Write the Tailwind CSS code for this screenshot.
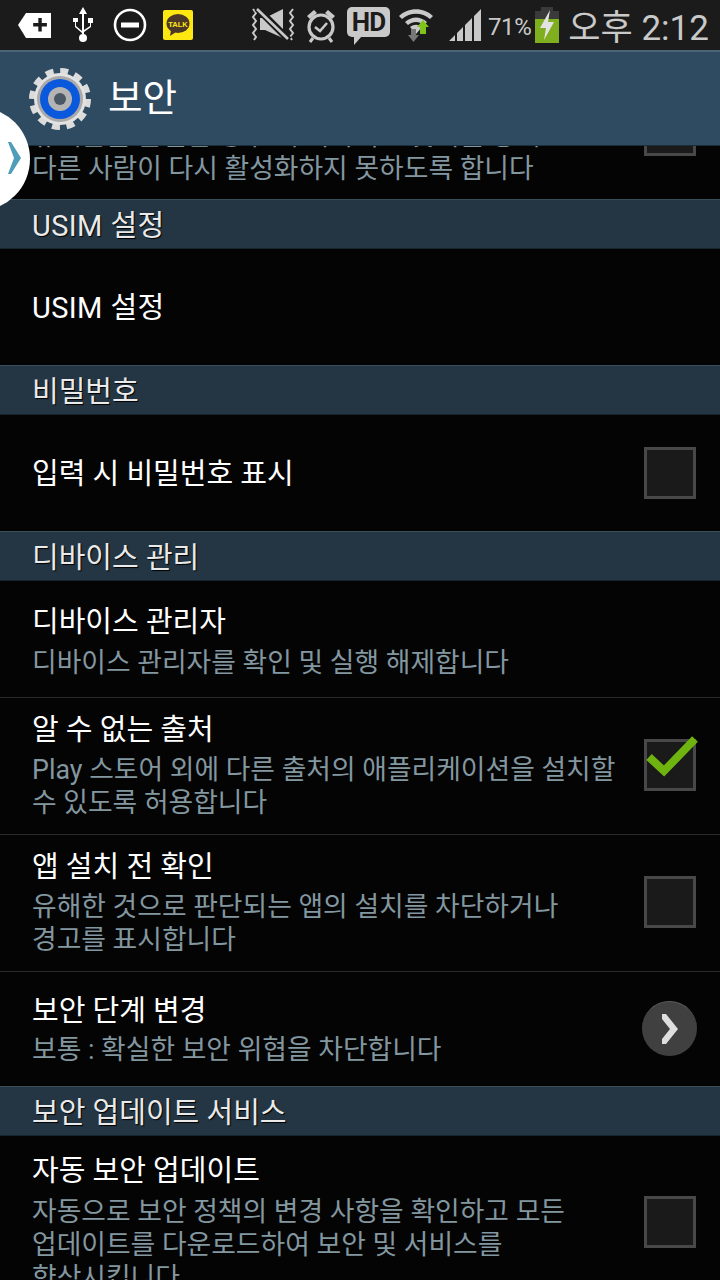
<!DOCTYPE html>
<html lang="ko">
<head>
<meta charset="UTF-8">
<title>보안</title>
<script src="https://cdn.jsdelivr.net/npm/@tailwindcss/browser@4"></script>
</head>
<body class="bg-black">
<div class="relative w-[720px] h-[1280px] overflow-hidden bg-[#040404] font-['Roboto','Noto_Sans_CJK_KR',sans-serif]">

  <!-- status bar -->
  <div class="h-[50px] bg-[#1b1b1b] flex items-center pl-[18px] text-[#c9c9c9]">
    <svg class="w-[33px] h-[26px] mr-[21px]" viewBox="0 0 33 26"><path d="M0 13 8 1h25v25H8z" fill="#fff"/><path d="M16 13h14M23 6v14" stroke="#1b1b1b" stroke-width="3.5" transform="translate(-.5 0) scale(.98)"/></svg>
    <svg class="w-[22px] h-[36px] mr-[19px]" viewBox="0 0 22 36" fill="#fff"><path d="M11 0l4 7h-3v20h-2V7H7z"/><circle cx="11" cy="31" r="4"/><path d="M10 26 3 20v-5H1v-4h5v4H4v4l6 5zM12 23l6-4v-3h-2v-5h5v5h-2v4l-7 5z"/></svg>
    <svg class="w-[34px] h-[34px] mr-[16px]" viewBox="0 0 34 34"><circle cx="17" cy="17" r="15" fill="none" stroke="#fff" stroke-width="2.6"/><rect x="8" y="14.5" width="18" height="5" fill="#fff"/></svg>
    <svg class="w-[30px] h-[30px] mr-[56px]" viewBox="0 0 30 30"><rect width="30" height="30" rx="2" fill="#ffe812"/><ellipse cx="15" cy="13.5" rx="11.5" ry="9.5" fill="#4a3728"/><path d="M8 20l-1 6 6-4z" fill="#4a3728"/><text x="15" y="16.5" text-anchor="middle" font-size="7.5" font-weight="700" fill="#ffe812" font-family="Liberation Sans">TALK</text></svg>
    <svg class="w-[48px] h-[36px] mr-[7px]" viewBox="0 0 48 36" fill="none" stroke="#c9c9c9"><path d="M4 2l3 4-3 4 3 4-3 4 3 4-3 4 3 4-2 3M44 2l-3 4 3 4-3 4 3 4-3 4 3 4-3 4 2 3" stroke-width="2"/><path d="M11 11h5L34 2v29L16 23h-5z" fill="#c9c9c9" stroke="none"/><path d="M8 1l32 32" stroke="#1b1b1b" stroke-width="7"/><path d="M8 2l31 30" stroke-width="2.6"/></svg>
    <svg class="w-[34px] h-[36px] mr-[9px]" viewBox="0 0 34 36" fill="none" stroke="#c9c9c9"><circle cx="17" cy="20" r="12" stroke-width="3.2"/><path d="M11 20l5 4 7-8" stroke-width="2.6"/><path d="M3 9l7-6 3 3-7 6zM31 9l-7-6-3 3 7 6z" fill="#c9c9c9" stroke="none"/><path d="M9 31l-3 4M25 31l3 4" stroke-width="3"/></svg>
    <div class="relative w-[43px] h-[30px] mr-[8px] -mt-[6px] bg-[#c9c9c9] rounded-[5px] flex items-center justify-center text-[#1b1b1b] text-[26px] font-bold leading-none tracking-[-1px]">HD<span class="absolute left-[7px] -bottom-[8px] w-0 h-0 border-t-[9px] border-t-[#c9c9c9] border-r-[8px] border-r-transparent"></span></div>
    <svg class="w-[36px] h-[36px] mr-[15px]" viewBox="0 0 36 36"><path d="M1 9C10 0 26 0 35 9l-3 3C24 5 12 5 4 12z" fill="#c9c9c9"/><path d="M7 15c7-6 15-6 22 0l-3 3c-5-4-11-4-16 0z" fill="#c9c9c9"/><path d="M12 20c4-3 8-3 12 0l-6 7z" fill="#c9c9c9"/><path d="M10 28h3v-6h5v6h3l-5.500 7z" fill="#777"/><path d="M20 20h3v7h6v-7h3l-6-7z" fill="#7fc31c" transform="translate(-1 0)"/></svg>
    <svg class="w-[33px] h-[32px] mr-[6px]" viewBox="0 0 33 32" fill="#c9c9c9"><path d="M0 32 6 26v6zM8 24l6-6v14H8zM16 16l7-7v23h-7zM25 7l7-7v32h-7z"/></svg>
    <span class="text-[24px] leading-none tracking-[-0.4px] mr-[4px] mt-[3px]">71%</span>
    <svg class="w-[24px] h-[36px] mr-[9px]" viewBox="0 0 24 36"><rect x="6" y="0" width="12" height="4" fill="#3a3a3a"/><rect x="0" y="4" width="24" height="12" fill="#3a3a3a"/><rect x="0" y="12" width="24" height="24" fill="#7fae1f"/><path d="M15 3 5 21h6l-2 12 10-18h-6z" fill="#e3e3e3"/></svg>
    <span class="text-[35px] leading-none mt-[6px] whitespace-nowrap">오후 2:12</span>
  </div>

  <!-- title bar -->
  <div class="h-[96px] bg-[#2f4b61] border-t-[2px] border-[#4b6577] border-b border-b-[#1c2d3a] flex items-center pl-[29px] relative z-10">
    <svg class="w-[62px] h-[64px] mr-[17px]" viewBox="0 0 62 64">
      <circle cx="31" cy="32" r="28" fill="none" stroke="#dcdcdc" stroke-width="6" stroke-dasharray="8 6.660"/>
      <circle cx="31" cy="32" r="26" fill="#e2e2e2"/>
      <circle cx="31" cy="32" r="23" fill="#a9a9a9"/>
      <circle cx="31" cy="32" r="20" fill="#0a58dc"/>
      <circle cx="31" cy="32" r="12" fill="#b4b4b4"/>
      <circle cx="31" cy="32" r="6" fill="#4a5764"/>
    </svg>
    <span class="text-[37.500px] leading-none text-white">보안</span>
  </div>

  <!-- floating handle -->
  <div class="absolute left-[-76px] top-[107px] w-[106px] h-[104px] rounded-full bg-white z-20"></div>
  <svg class="absolute left-[8px] top-[142px] w-[13px] h-[32px] z-30" viewBox="0 0 13 32"><path d="M0 0h3l10 16L3 32H0l6-16z" fill="#4f9db8"/></svg>

  <!-- settings list -->
  <div>
    <div class="relative h-[53px] overflow-hidden pl-[32px] flex flex-col justify-end pb-[13px]">
      <div class="absolute left-[644px] -top-[10px] w-[52px] h-[20px] border-[3px] border-[#484848] bg-[#1a1a1a]"></div>
      <p class="text-[26.800px] leading-[33px] text-[#8397a0] whitespace-nowrap">휴대폰을 분실한 경우 내 디바이스 찾기를 통해</p>
      <p class="text-[26.800px] leading-[33px] text-[#8397a0]">다른 사람이 다시 활성화하지 못하도록 합니다</p>
    </div>

    <div class="h-[50px] bg-[#243644] border-t border-[#3a4d5a] border-b border-b-[#16242e] pl-[32px] pt-[6px] flex items-center text-[29px] text-[#eaeaea] [text-shadow:1px_1px_1px_#000] tracking-[0.4px]">USIM 설정</div>
    <div class="h-[116px] pl-[32px] pt-[3px] flex items-center text-[29px] text-white tracking-[0.4px]">USIM 설정</div>

    <div class="h-[50px] bg-[#243644] border-t border-[#3a4d5a] border-b border-b-[#16242e] pl-[32px] pt-[6px] flex items-center text-[29px] text-[#eaeaea] [text-shadow:1px_1px_1px_#000]">비밀번호</div>
    <div class="h-[116px] pl-[32px] pr-[24px] flex items-center justify-between text-[29px] text-white">
      <span class="pt-[3px]">입력 시 비밀번호 표시</span>
      <div class="w-[52px] h-[52px] border-[3px] border-[#484848] bg-[#1a1a1a]"></div>
    </div>

    <div class="h-[50px] bg-[#243644] border-t border-[#3a4d5a] border-b border-b-[#16242e] pl-[32px] pt-[6px] flex items-center text-[29px] text-[#eaeaea] [text-shadow:1px_1px_1px_#000]">디바이스 관리</div>
    <div class="h-[117px] pl-[32px] pt-[4px] flex flex-col justify-center border-b border-[#2a2a2a]">
      <p class="text-[29px] leading-[40px] text-white">디바이스 관리자</p>
      <p class="text-[26.800px] leading-[33px] mt-[5px] text-[#8397a0]">디바이스 관리자를 확인 및 실행 해제합니다</p>
    </div>
    <div class="h-[137px] pl-[32px] pr-[24px] flex items-center justify-between border-b border-[#2a2a2a]">
      <div class="w-[596px] -mt-[2px]">
        <p class="text-[29px] leading-[40px] text-white">알 수 없는 출처</p>
        <p class="text-[26.800px] leading-[33px] mt-[4px] text-[#8397a0]">Play 스토어 외에 다른 출처의 애플리케이션을 설치할 수 있도록 허용합니다</p>
      </div>
      <div class="relative w-[52px] h-[52px] -mt-[2px] border-[3px] border-[#484848] bg-[#1a1a1a] shrink-0">
        <svg class="absolute -left-[1px] -top-[6px] w-[54px] h-[42px]" viewBox="0 0 54 42"><path d="M3 21l15 14L49 3" fill="none" stroke="#6fb310" stroke-width="8"/></svg>
      </div>
    </div>
    <div class="h-[137px] pl-[32px] pr-[24px] flex items-center justify-between border-b border-[#2a2a2a]">
      <div class="w-[596px] -mt-[2px]">
        <p class="text-[29px] leading-[40px] text-white">앱 설치 전 확인</p>
        <p class="text-[26.800px] leading-[33px] mt-[4px] text-[#8397a0]">유해한 것으로 판단되는 앱의 설치를 차단하거나<br>경고를 표시합니다</p>
      </div>
      <div class="w-[52px] h-[52px] -mt-[2px] border-[3px] border-[#484848] bg-[#1a1a1a] shrink-0"></div>
    </div>
    <div class="h-[114px] pl-[32px] pr-[23px] flex items-center justify-between">
      <div>
        <p class="text-[29px] leading-[40px] text-white">보안 단계 변경</p>
        <p class="text-[26.800px] leading-[33px] mt-[3px] text-[#8397a0]">보통 : 확실한 보안 위협을 차단합니다</p>
      </div>
      <div class="w-[55px] h-[55px] -mt-[2px] rounded-full bg-[#404040] border-t border-[#5a5a5a] flex items-center justify-center shrink-0">
        <svg class="w-[16px] h-[30px]" viewBox="0 0 16 30"><path d="M0 0h4l12 15-12 15H0v-5l8-10L0 5z" fill="#dedede"/></svg>
      </div>
    </div>

    <div class="h-[50px] bg-[#243644] border-t border-[#3a4d5a] border-b border-b-[#16242e] pl-[32px] pt-[6px] flex items-center text-[29px] text-[#eaeaea] [text-shadow:1px_1px_1px_#000]">보안 업데이트 서비스</div>
    <div class="pl-[32px] pr-[24px] pt-[15px] flex items-start justify-between">
      <div class="w-[596px]">
        <p class="text-[29px] leading-[40px] text-white">자동 보안 업데이트</p>
        <p class="text-[26.800px] leading-[33px] mt-[5px] text-[#8397a0]">자동으로 보안 정책의 변경 사항을 확인하고 모든<br>업데이트를 다운로드하여 보안 및 서비스를<br>향상시킵니다</p>
      </div>
      <div class="w-[52px] h-[52px] mt-[45px] border-[3px] border-[#484848] bg-[#1a1a1a] shrink-0"></div>
    </div>
  </div>
</div>
</body>
</html>
